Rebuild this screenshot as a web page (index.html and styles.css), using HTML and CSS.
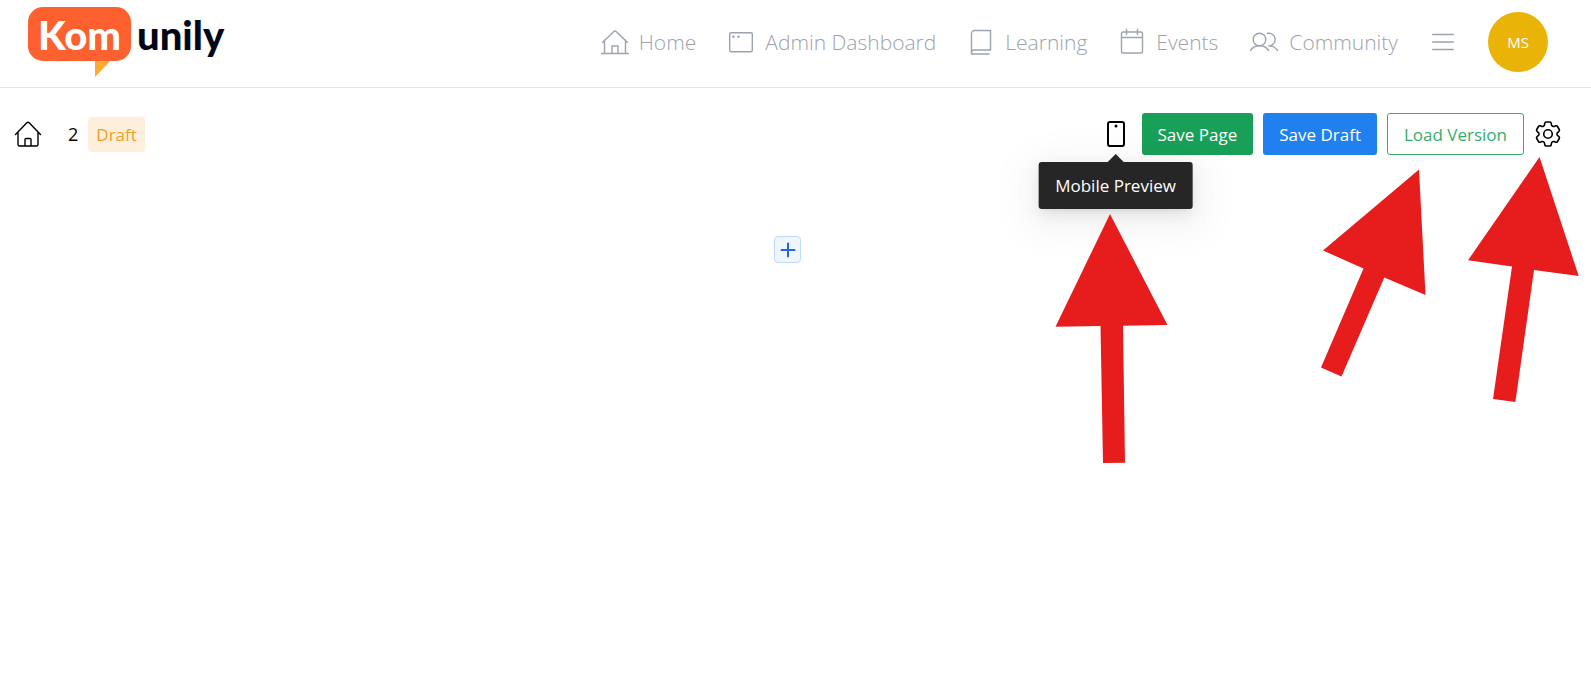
FILE: index.html
```html
<!DOCTYPE html>
<html lang="en">
<head>
    <meta charset="UTF-8">
    <meta name="viewport" content="width=device-width, initial-scale=1.0">
    <title>Komunily</title>
    <link rel="stylesheet" href="styles.css">
</head>
<body>
    <header class="header">
        <a class="logo" href="#" aria-label="Komunily">
            <span class="logo-bubble">Kom</span>
            <span class="logo-rest">unily</span>
        </a>

        <nav class="nav">
            <a class="nav-link" href="#">
                <svg class="icon" viewBox="0 0 28 28"><path d="M0.700 25.500h26.600M3.500 25.500V12M24.500 25.500V12M1.500 14.500 12.600 3.800a2 2 0 0 1 2.800 0L26.500 14.500M11 25.500v-7.500h6v7.500"/></svg>
                Home
            </a>
            <a class="nav-link" href="#">
                <svg class="icon" viewBox="0 0 28 28"><rect x="2.700" y="4.700" width="22.600" height="19" rx="1.500"/><circle class="dot" cx="6.500" cy="8.800" r="1.200"/><circle class="dot" cx="11.500" cy="8.800" r="1.200"/></svg>
                Admin Dashboard
            </a>
            <a class="nav-link" href="#">
                <svg class="icon" viewBox="0 0 28 28"><path d="M4.500 24.500V5.500a3 3 0 0 1 3-3h16v19.500h-16.500a2.500 2.500 0 0 0-2.500 2.500v1.500h17.500"/></svg>
                Learning
            </a>
            <a class="nav-link" href="#">
                <svg class="icon" viewBox="0 0 28 28"><rect x="3.500" y="4" width="21" height="21" rx="1.500"/><path d="M3.500 9.500h21M8.500 1.500v5M19.500 1.500v5"/></svg>
                Events
            </a>
            <a class="nav-link" href="#">
                <svg class="icon icon-wide" viewBox="0 0 30 28"><circle cx="10.500" cy="11.500" r="6.300"/><path d="M1.500 22.500c2-3 5.200-4.700 9-4.700s7 1.700 9 4.700M18.500 5.300h1.500a6.250 6.250 0 0 1 0 12.500c3.800 0 6.500 1.700 8.500 4.700"/></svg>
                Community
            </a>
            <button class="nav-menu" type="button" aria-label="Menu">
                <svg class="icon" viewBox="0 0 28 28"><path d="M3.700 6.500h20.600M3.700 14h20.600M3.700 21.500h20.600"/></svg>
            </button>
            <button class="avatar" type="button">MS</button>
        </nav>
    </header>

    <main class="editor">
        <div class="toolbar">
            <div class="page-info">
                <a class="home-link" href="#" aria-label="Home">
                    <svg class="icon" viewBox="0 0 28 28"><path d="M1.500 14.500 12.600 3a2 2 0 0 1 2.800 0L26.500 14.500M4 12v12.500a1.500 1.500 0 0 0 1.500 1.500h17a1.500 1.500 0 0 0 1.500-1.500V12M11 26v-6.500a1 1 0 0 1 1-1h4a1 1 0 0 1 1 1V26"/></svg>
                </a>
                <span class="page-name">2</span>
                <span class="badge">Draft</span>
            </div>

            <div class="actions">
                <div class="preview">
                    <button class="icon-btn" type="button" aria-label="Mobile Preview" aria-describedby="preview-tip">
                        <svg class="icon icon-phone" viewBox="0 0 28 28"><rect x="6" y="2" width="16" height="24" rx="2"/><circle class="dot" cx="14" cy="6" r="1.500"/></svg>
                    </button>
                    <div class="tooltip" id="preview-tip" role="tooltip">Mobile Preview</div>
                </div>
                <button class="btn btn-save" type="button">Save Page</button>
                <button class="btn btn-draft" type="button">Save Draft</button>
                <button class="btn btn-load" type="button">Load Version</button>
                <button class="icon-btn" type="button" aria-label="Settings">
                    <svg class="icon icon-gear" viewBox="1.500 1.500 21 21"><path d="M9.594 3.940c.09-.542.56-.94 1.110-.94h2.593c.55 0 1.020.398 1.110.94l.213 1.281c.063.374.313.686.645.87.074.04.147.083.22.127.325.196.72.257 1.075.124l1.217-.456a1.125 1.125 0 0 1 1.370.49l1.296 2.247a1.125 1.125 0 0 1-.26 1.431l-1.003.827c-.293.241-.438.613-.43.992a7.723 7.723 0 0 1 0 .255c-.008.378.137.75.43.991l1.004.827c.424.35.534.955.26 1.430l-1.298 2.247a1.125 1.125 0 0 1-1.369.491l-1.217-.456c-.355-.133-.75-.072-1.076.124a6.470 6.470 0 0 1-.22.128c-.331.183-.581.495-.644.869l-.213 1.281c-.09.543-.56.94-1.110.94h-2.594c-.55 0-1.019-.398-1.110-.94l-.213-1.281c-.062-.374-.312-.686-.644-.87a6.520 6.520 0 0 1-.22-.127c-.325-.196-.72-.257-1.076-.124l-1.217.456a1.125 1.125 0 0 1-1.369-.49l-1.297-2.247a1.125 1.125 0 0 1 .26-1.431l1.004-.827c.292-.24.437-.613.43-.991a6.932 6.932 0 0 1 0-.255c.007-.38-.138-.751-.43-.992l-1.004-.827a1.125 1.125 0 0 1-.26-1.430l1.297-2.247a1.125 1.125 0 0 1 1.370-.491l1.216.456c.356.133.751.072 1.076-.124.072-.044.146-.086.22-.128.332-.183.582-.495.644-.869l.214-1.280Z"/><circle cx="12" cy="12" r="3.200"/></svg>
                </button>
            </div>
        </div>

        <div class="canvas">
            <button class="add-btn" type="button" aria-label="Add section">
                <svg viewBox="0 0 16 16"><path d="M8 1.500v13M1.500 8h13"/></svg>
            </button>
        </div>
    </main>

    <!-- Pointers to the toolbar controls -->
    <svg class="arrows" viewBox="0 0 560 330" aria-hidden="true">
        <path d="M79 64 136.500 175 92 175.800 94 312.800 72 313 69.500 176 24.500 176.700Z"/>
        <path d="M388 19.500 394.500 145 353.300 127.500 310.500 226.500 290 217.500 332.500 118.500 292 100.500Z"/>
        <path d="M508.500 7 547.700 126 503 120 484.400 252 462 249 481 116.500 437 110.300Z"/>
    </svg>
</body>
</html>
```

FILE: styles.css
```css
* {
    margin: 0;
    padding: 0;
    box-sizing: border-box;
}

body {
    font-family: "Open Sans", "Noto Sans", sans-serif;
    background: #fff;
    color: #000;
    min-height: 100vh;
    position: relative;
    overflow-x: hidden;
}

button {
    font-family: inherit;
    color: inherit;
    background: none;
    border: none;
    cursor: pointer;
}

a {
    color: inherit;
    text-decoration: none;
}

.icon {
    display: block;
    width: 28px;
    height: 28px;
    flex-shrink: 0;
    fill: none;
    stroke: currentColor;
    stroke-width: 1.4;
    stroke-linecap: round;
    stroke-linejoin: round;
}

.icon .dot {
    fill: currentColor;
    stroke: none;
}

.icon-wide {
    width: 30px;
}

/* Header */
.header {
    display: flex;
    justify-content: space-between;
    align-items: flex-start;
    height: 88px;
    padding: 0 43px 0 28px;
    border-bottom: 1px solid #e5e5e5;
}

.logo {
    display: flex;
    gap: 6px;
    padding-top: 7px;
    font-family: Lato, sans-serif;
    font-size: 40px;
    font-weight: 900;
    line-height: 56px;
}

.logo-bubble {
    position: relative;
    width: 103px;
    height: 54px;
    border-radius: 15px;
    background: #ff6030;
    color: #fff;
    text-align: center;
}

.logo-bubble::after {
    content: "";
    position: absolute;
    left: 67px;
    top: 54px;
    width: 15px;
    height: 16px;
    background: #ffab30;
    clip-path: polygon(0 0, 100% 0, 0 100%);
}

.logo-rest {
    color: #020817;
}

.nav {
    display: flex;
    align-items: center;
    gap: 31px;
    padding-top: 12px;
    color: #9ca3af;
}

.nav-link {
    display: flex;
    align-items: center;
    gap: 10px;
    font-size: 21px;
    font-weight: 300;
    line-height: 28px;
    white-space: nowrap;
}

.avatar {
    width: 60px;
    height: 60px;
    border-radius: 50%;
    background: #eab308;
    color: #fff;
    font-size: 15px;
}

/* Toolbar */
.editor {
    padding-right: 16px;
}

.toolbar {
    display: flex;
    justify-content: space-between;
    align-items: center;
    padding: 25px 13px 0 14px;
}

.page-info {
    display: flex;
    align-items: center;
    font-size: 18px;
}

.page-name {
    margin: 0 10px 0 26px;
}

.badge {
    padding: 0 8px;
    border-radius: 3px;
    background: #fdefdc;
    color: #f0a020;
    font-size: 17px;
    line-height: 35px;
}

.actions {
    display: flex;
    align-items: center;
    gap: 10px;
}

.icon-btn {
    display: block;
}

.btn {
    height: 42px;
    padding: 0 16px;
    border-radius: 3px;
    color: #fff;
    font-size: 17px;
    white-space: nowrap;
}

.btn-save {
    background: #18a058;
}

.btn-draft {
    background: #2080f0;
}

.btn-load {
    border: 1px solid #36ad6a;
    color: #36ad6a;
}

.icon-phone {
    stroke-width: 2;
}

.icon-gear {
    stroke-width: 1.2;
}

.preview {
    position: relative;
    margin-right: 2px;
}

.tooltip {
    position: absolute;
    top: 42px;
    left: 50%;
    transform: translateX(-50%);
    padding: 0 17px;
    border-radius: 3px;
    background: #262626;
    color: #fff;
    font-size: 17px;
    line-height: 47px;
    white-space: nowrap;
    box-shadow: 0 3px 6px -4px rgba(0, 0, 0, 0.12), 0 6px 16px rgba(0, 0, 0, 0.08), 0 9px 40px 12px rgba(0, 0, 0, 0.05);
}

.tooltip::before {
    content: "";
    position: absolute;
    bottom: 100%;
    left: 50%;
    margin-left: -8px;
    border: 8px solid transparent;
    border-top: none;
    border-bottom-color: #262626;
}

/* Canvas */
.canvas {
    display: flex;
    justify-content: center;
    padding-top: 81px;
}

.add-btn {
    display: flex;
    align-items: center;
    justify-content: center;
    width: 27px;
    height: 27px;
    border: 1px solid #bfdbfe;
    border-radius: 4px;
    background: #eff6ff;
}

.add-btn svg {
    width: 16px;
    height: 16px;
    stroke: #2563eb;
    stroke-width: 2;
    stroke-linecap: round;
}

.arrows {
    position: absolute;
    top: 150px;
    right: 0;
    width: 560px;
    height: 330px;
    fill: #e71d1d;
    pointer-events: none;
}
```
